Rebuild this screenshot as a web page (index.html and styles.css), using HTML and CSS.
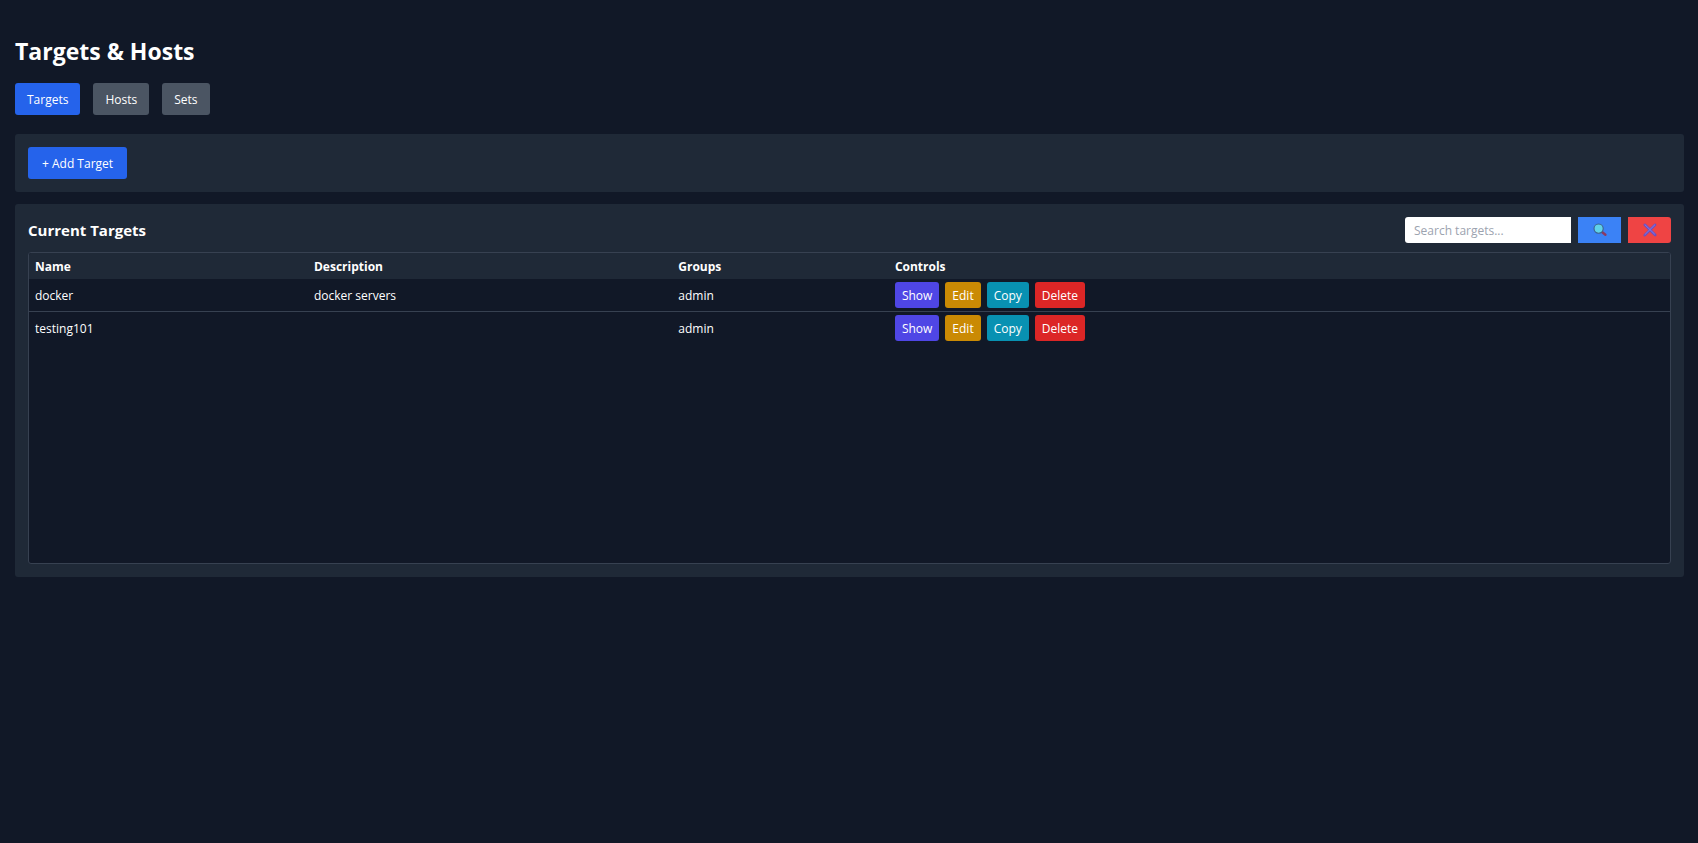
FILE: index.html
```html
<!DOCTYPE html>
<html lang="en">
<head>
    <meta charset="UTF-8">
    <meta name="viewport" content="width=device-width, initial-scale=1.0">
    <title>Targets &amp; Hosts</title>
    <link rel="stylesheet" href="styles.css">
</head>
<body>
    <h1>Targets &amp; Hosts</h1>

    <nav class="tabs">
        <button type="button" class="btn btn-tab active">Targets</button>
        <button type="button" class="btn btn-tab">Hosts</button>
        <button type="button" class="btn btn-tab">Sets</button>
    </nav>

    <section class="panel">
        <button type="button" class="btn btn-add">+ Add Target</button>
    </section>

    <section class="panel">
        <div class="panel-header">
            <h2>Current Targets</h2>
            <form class="search">
                <input type="text" class="search-input" placeholder="Search targets..." aria-label="Search targets">
                <button type="button" class="search-btn" aria-label="Search">
                    <svg viewBox="0 0 14 14" width="14" height="14">
                        <path d="M9 9l3.4 2.8" stroke="#8b3a62" stroke-width="2.4" stroke-linecap="round"/>
                        <circle cx="5.6" cy="5.6" r="4.6" fill="#5fd3ea" stroke="#3d6289" stroke-width="1.1"/>
                    </svg>
                </button>
                <button type="button" class="search-btn clear-btn" aria-label="Clear">
                    <svg viewBox="0 0 14 14" width="14" height="14">
                        <path d="M1.8 1.8L12.2 12M12 1.8L1.8 12.2" stroke="#6b4fc0" stroke-width="2.6" stroke-linecap="round"/>
                        <path d="M2 1.8L11.5 11M11.8 1.8L2 11.5" stroke="#8a7be0" stroke-width="1" stroke-linecap="round"/>
                    </svg>
                </button>
            </form>
        </div>

        <div class="table-box">
            <table>
                <thead>
                    <tr>
                        <th class="col-name">Name</th>
                        <th class="col-description">Description</th>
                        <th class="col-groups">Groups</th>
                        <th>Controls</th>
                    </tr>
                </thead>
                <tbody>
                    <tr>
                        <td>docker</td>
                        <td>docker servers</td>
                        <td>admin</td>
                        <td class="actions">
                            <div class="controls">
                                <button type="button" class="btn-sm show">Show</button>
                                <button type="button" class="btn-sm edit">Edit</button>
                                <button type="button" class="btn-sm copy">Copy</button>
                                <button type="button" class="btn-sm delete">Delete</button>
                            </div>
                        </td>
                    </tr>
                    <tr>
                        <td>testing101</td>
                        <td></td>
                        <td>admin</td>
                        <td class="actions">
                            <div class="controls">
                                <button type="button" class="btn-sm show">Show</button>
                                <button type="button" class="btn-sm edit">Edit</button>
                                <button type="button" class="btn-sm copy">Copy</button>
                                <button type="button" class="btn-sm delete">Delete</button>
                            </div>
                        </td>
                    </tr>
                </tbody>
            </table>
        </div>
    </section>
</body>
</html>
```
FILE: styles.css
```css
* {
    box-sizing: border-box;
}
body {
    margin: 0;
    padding: 32px 14px 32px 15px;
    background: #111827;
    color: #fff;
    font-family: 'Segoe UI', 'Open Sans', 'Noto Sans', sans-serif;
    font-size: 12px;
    line-height: 20px;
}
h1 {
    margin: 0 0 13px;
    font-size: 23px;
    line-height: 38px;
    font-weight: 700;
}
h2 {
    margin: 0;
    font-size: 15px;
    line-height: 26px;
    font-weight: 700;
}
button,
input {
    font: inherit;
    border: none;
}
button {
    color: #fff;
    cursor: pointer;
}
.tabs {
    display: flex;
    gap: 13px;
    margin-bottom: 19px;
}
.btn {
    padding: 7px 12px 5px;
    border-radius: 3px;
}
.btn-tab {
    background: #4b5563;
}
.btn-tab.active {
    background: #2563eb;
}
.btn-add {
    display: block;
    padding: 7px 14px 5px;
    background: #2563eb;
}
.panel {
    background: #1f2937;
    border-radius: 3px;
    padding: 13px;
    margin-bottom: 12px;
}
.panel-header {
    display: flex;
    justify-content: space-between;
    align-items: center;
    margin-bottom: 9px;
}
.search {
    display: flex;
    gap: 7px;
}
.search-input {
    width: 166px;
    height: 26px;
    padding: 3px 9px;
    background: #fff;
    color: #111827;
    border-radius: 3px 0 0 3px;
}
.search-input::placeholder {
    color: #9ca3af;
}
.search-btn {
    display: flex;
    align-items: center;
    justify-content: center;
    width: 43px;
    height: 26px;
    padding: 0;
    background: #3b82f6;
}
.clear-btn {
    background: #ef4444;
    border-radius: 0 3px 3px 0;
}
.table-box {
    height: 312px;
    overflow-y: auto;
    background: #111827;
    border: 1px solid #374151;
    border-radius: 3px;
}
table {
    width: 100%;
    border-collapse: collapse;
    table-layout: fixed;
}
th,
td {
    padding: 4px 6px 2px;
    text-align: left;
}
th {
    background: #1f2937;
    font-weight: 700;
}
td.actions {
    padding: 3px 6px;
}
.col-name {
    width: 17%;
}
.col-description {
    width: 22.2%;
}
.col-groups {
    width: 13.2%;
}
tbody tr + tr {
    border-top: 1px solid #374151;
}
.controls {
    display: flex;
    gap: 6px;
}
.btn-sm {
    padding: 4px 7px 2px;
    border-radius: 3px;
}
.show {
    background: #4f46e5;
}
.edit {
    background: #ca8a04;
}
.copy {
    background: #0891b2;
}
.delete {
    background: #dc2626;
}
```
